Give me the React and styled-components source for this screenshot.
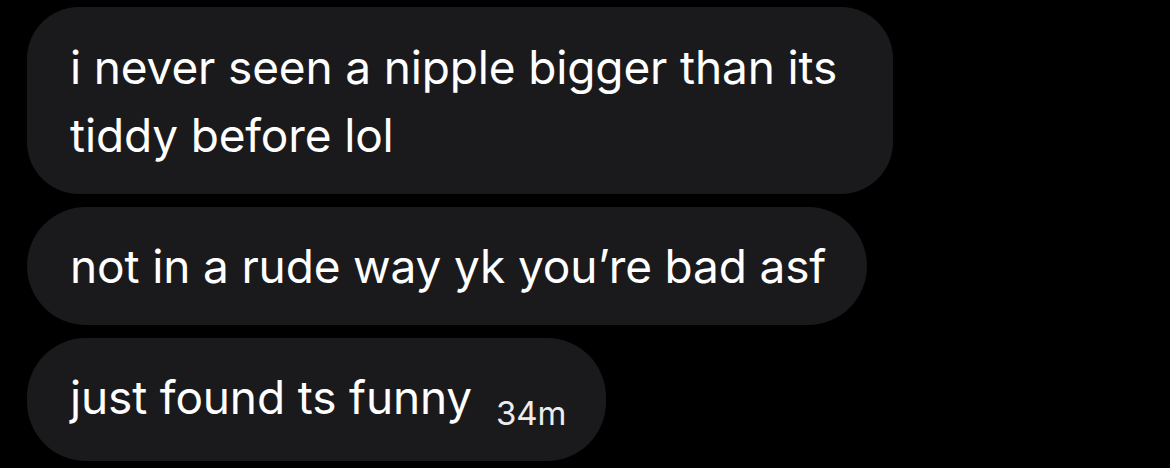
import React from 'react';
import styled, { createGlobalStyle } from 'styled-components';

const GlobalStyle = createGlobalStyle`
  html, body {
    margin: 0;
    padding: 0;
    background: #000;
  }
  body {
    font-family: Inter, "Noto Sans", sans-serif;
    -webkit-font-smoothing: antialiased;
  }
`;

// Column of incoming messages
const Thread = styled.div`
  width: 1170px;
  height: 468px;
  box-sizing: border-box;
  padding: 7px 0 0 27px;
  display: flex;
  flex-direction: column;
  align-items: flex-start;
  gap: 13px;
  background: #000;
  overflow: hidden;
`;

const Bubble = styled.div`
  background: #1a1a1c;
  color: #fff;
  border-radius: ${(p) => (p.$multi ? '52px' : '59px')};
  padding: ${(p) => (p.$multi ? '26px 43px 25px' : '25px 43px')};
  font-size: 46px;
  line-height: 68px;
  letter-spacing: -0.15px;
  white-space: nowrap;
  box-sizing: border-box;
  width: ${(p) => p.$width}px;
  display: flex;
  align-items: baseline;
`;

const Lines = styled.div`
  display: flex;
  flex-direction: column;
`;

const Time = styled.span`
  font-size: 33px;
  color: #ececec;
  margin-left: 24px;
  position: relative;
  top: 11px;
`;

export default function App() {
  return (
    <>
      <GlobalStyle />
      <Thread>
        <Bubble $multi $width={866}>
          <Lines>
            <span>i never seen a nipple bigger than its</span>
            <span>tiddy before lol</span>
          </Lines>
        </Bubble>
        <Bubble $width={840}>not in a rude way yk you’re bad asf</Bubble>
        <Bubble $width={579}>
          just found ts funny
          <Time>34m</Time>
        </Bubble>
      </Thread>
    </>
  );
}
